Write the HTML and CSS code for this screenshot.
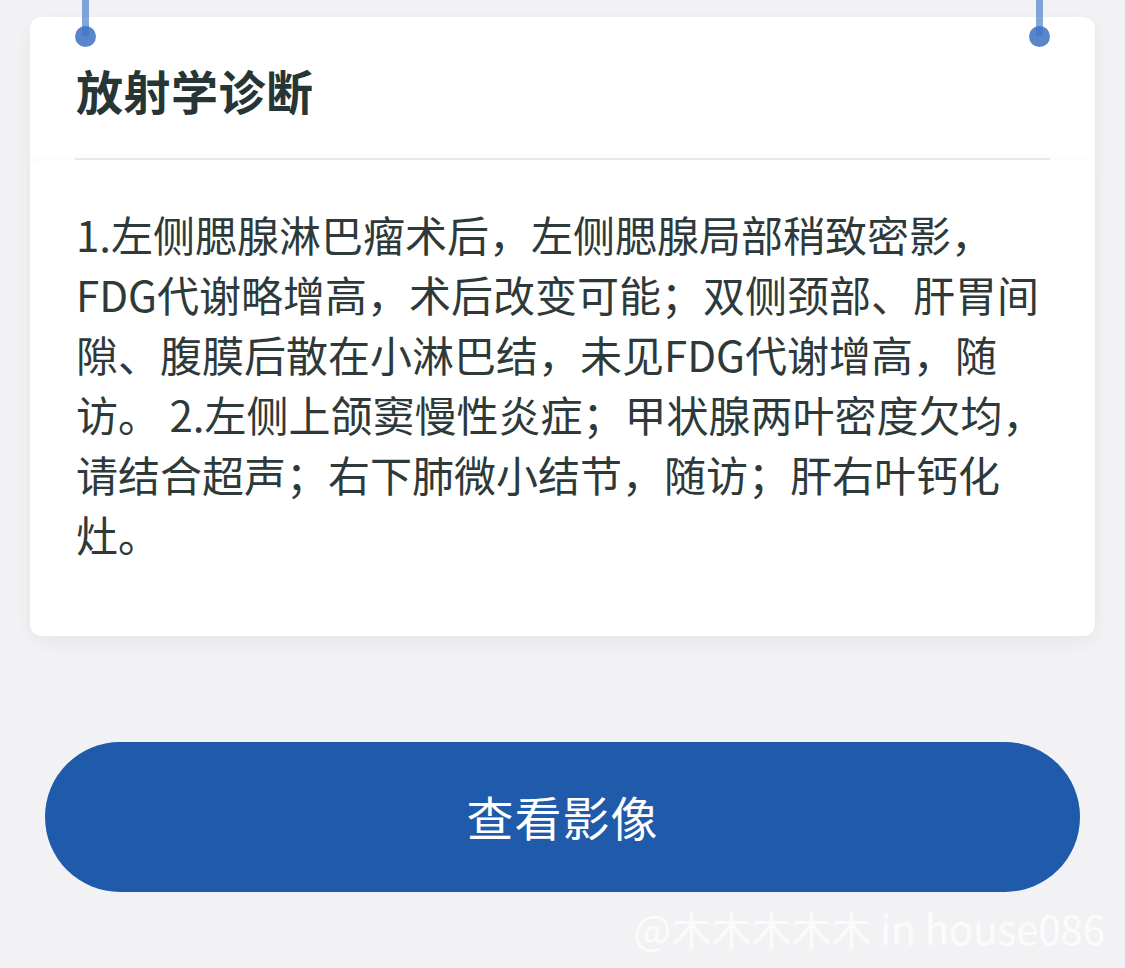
FILE: index.html
```html
<!DOCTYPE html>
<html lang="zh-CN">
<head>
<meta charset="utf-8">
<title>放射学诊断</title>
<link rel="stylesheet" href="styles.css">
</head>
<body>
<div class="page">
  <div class="card">
    <span class="pin pin-left"></span>
    <span class="pin pin-right"></span>
    <div class="card-head">
      <h2 class="title">放射学诊断</h2>
    </div>
    <div class="divider"></div>
    <div class="card-body">
      <p class="report">1.左侧腮腺淋巴瘤术后，左侧腮腺局部稍致密影，FDG代谢略增高，术后改变可能；双侧颈部、肝胃间隙、腹膜后散在小淋巴结，未见FDG代谢增高，随访。 2.左侧上颌窦慢性炎症；甲状腺两叶密度欠均，请结合超声；右下肺微小结节，随访；肝右叶钙化灶。</p>
    </div>
  </div>
  <button class="view-btn" type="button">查看影像</button>
  <div class="watermark">@木木木木木 in house086</div>
</div>
</body>
</html>
```

FILE: styles.css
```css
html, body {
  margin: 0;
  padding: 0;
}
body {
  background: #f2f2f5;
  font-family: "Noto Sans CJK SC", "Noto Sans", sans-serif;
  width: 1125px;
  height: 968px;
  overflow: hidden;
}
.page {
  position: relative;
  padding: 17px 30px 0;
  height: 951px;
}
.card {
  position: relative;
  background: #ffffff;
  border-radius: 12px;
  box-shadow: 0 6px 18px rgba(0, 0, 0, 0.05);
}
.pin {
  position: absolute;
  top: -17px;
  width: 21px;
  height: 64px;
}
.pin::before {
  content: "";
  position: absolute;
  left: 7px;
  top: 0;
  width: 7px;
  height: 36px;
  background: rgba(84, 130, 204, 0.72);
}
.pin::after {
  content: "";
  position: absolute;
  left: 0;
  top: 26px;
  width: 21px;
  height: 21px;
  border-radius: 50%;
  background: rgba(66, 116, 196, 0.88);
}
.pin-left { left: 45px; }
.pin-right { left: 999px; }
.card-head {
  padding: 49px 46px 44px;
}
.title {
  margin: 0;
  font-size: 47px;
  line-height: 48px;
  font-weight: 700;
  color: #263535;
  letter-spacing: 0.5px;
}
.divider {
  height: 2px;
  margin: 0 45px;
  background: #ebebeb;
}
.card-body {
  background: #ffffff;
  border-radius: 12px;
  box-shadow: 0 -3px 8px rgba(0, 0, 0, 0.025);
  padding: 44px 43px 72px 46px;
}
.report {
  margin: 0;
  font-size: 42px;
  line-height: 60px;
  color: #2e3a3a;
  letter-spacing: 0;
}
.view-btn {
  display: flex;
  align-items: center;
  justify-content: center;
  width: 1035px;
  height: 150px;
  margin: 106px 0 0 15px;
  border: none;
  border-radius: 75px;
  background: #1f5aab;
  color: #ffffff;
  font-family: "Noto Sans CJK SC", "Noto Sans", sans-serif;
  font-size: 47px;
  letter-spacing: 1px;
  padding: 0 0 4px;
}
.watermark {
  position: absolute;
  right: 20px;
  top: 902px;
  font-family: "Noto Sans CJK SC", "Liberation Sans", sans-serif;
  font-size: 40px;
  line-height: 52px;
  color: rgba(255, 255, 255, 0.75);
  white-space: nowrap;
}
```
